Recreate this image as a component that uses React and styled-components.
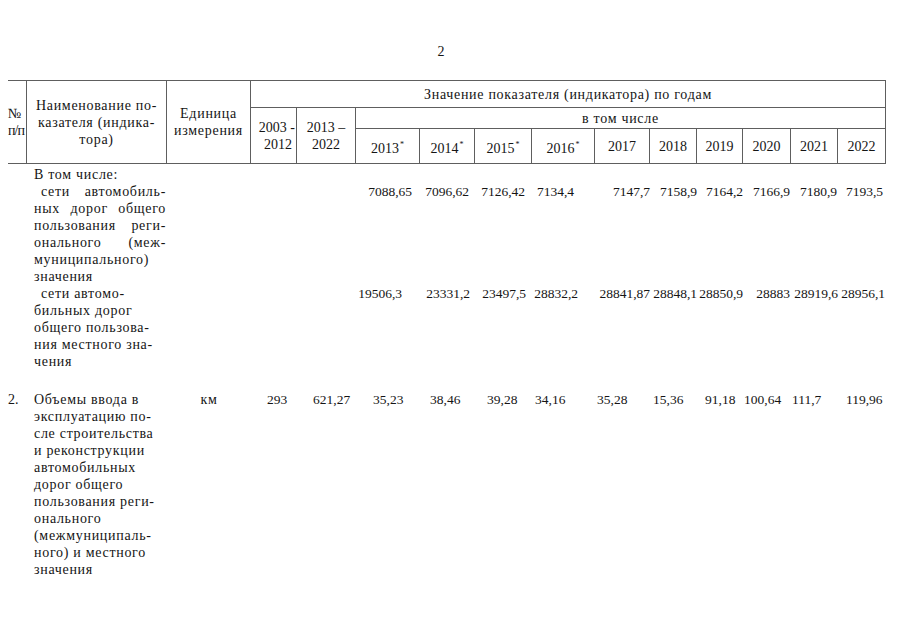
import React from "react";
import styled, {createGlobalStyle} from "styled-components";

const cols = "19px 140px 84px 46px 59px 64px 55px 57px 63px 55px 47px 46px 48px 47px 48px";
const line = "1px solid #5e5e5e";

const GlobalStyle = createGlobalStyle`
  html, body {
    margin: 0;
    background: #fff;
  }
  body {
    font-family: "Liberation Serif", "Times New Roman", serif;
    font-size: 14px;
    color: #151515;
  }
`

const Page = styled.div`
  width: 905px;
  height: 640px;
  padding: 43px 0 0 8px;
  box-sizing: border-box;
  overflow: hidden;
`
const PageNumber = styled.div`
  width: 878px;
  padding-right: 12px;
  box-sizing: border-box;
  text-align: center;
  line-height: 17px;
  height: 37px;
`
const HeadGrid = styled.div`
  display: grid;
  grid-template-columns: ${cols};
  grid-template-rows: 27px 21px 35px;
  border-top: ${line};
  width: 878px;
`
const HeadCell = styled.div`
  grid-column: ${p => p.col};
  grid-row: ${p => p.row};
  border-right: ${line};
  border-bottom: ${line};
  display: flex;
  flex-direction: column;
  justify-content: center;
  align-items: ${p => p.align || "center"};
  padding: ${p => p.pad || "0"};
  letter-spacing: ${p => (p.wide ? "0.7px" : "0")};
  line-height: 17px;
  box-sizing: border-box;
  white-space: nowrap;
`
const Star = styled.sup`
  font-size: 8px;
  vertical-align: 6px;
  margin-left: 1px;
`
const BodyRow = styled.div`
  display: grid;
  grid-template-columns: ${cols};
  width: 878px;
  margin-top: ${p => p.gap || 0}px;
  line-height: 17px;
`
const NumCell = styled.div`
  grid-column: 1;
`
const NameCell = styled.div`
  grid-column: 2;
  padding: 0 1px 0 7px;
  letter-spacing: 0.7px;
`
const UnitCell = styled.div`
  grid-column: 3;
  text-align: center;
  letter-spacing: 0.7px;
`
const Line = styled.div`
  white-space: nowrap;
  text-indent: ${p => (p.indent ? "7px" : "0")};
  text-align: ${p => (p.justify ? "justify" : "left")};
  text-align-last: ${p => (p.justify ? "justify" : "left")};
`
const Value = styled.div`
  white-space: nowrap;
  font-size: 13.5px;
  text-align: ${p => p.align};
  padding-right: ${p => (p.align === "right" ? p.pad : 0)}px;
  padding-left: ${p => (p.align === "left" ? p.pad : 0)}px;
`

const years = ["2013", "2014", "2015", "2016", "2017", "2018", "2019", "2020", "2021", "2022"];

const sub1 = ["7088,65", "7096,62", "7126,42", "7134,4", "7147,7", "7158,9", "7164,2", "7166,9", "7180,9", "7193,5"];
const sub1Pad = [8, 6, 7, 21, 0, 0, 0, 1, 1, 3];
const sub2 = ["19506,3", "23331,2", "23497,5", "28832,2", "28841,87", "28848,1", "28850,9", "28883", "28919,6", "28956,1"];
const sub2Pad = [18, 5, 6, 17, 0, 0, 0, 1, -2, 1];
const row2 = ["35,23", "38,46", "39,28", "34,16", "35,28", "15,36", "91,18", "100,64", "111,7", "119,96"];
const row2Pad = [17, 10, 12, 3, 2, 3, 8, 1, 1, 8];

const Values = ({items, pads, align}) => (
    <>
        {items.map((v, i) => (
            <Value key={i} align={align} pad={pads[i]}>{v}</Value>
        ))}
    </>
)

const App = () => {
    return (
        <Page>
            <GlobalStyle/>
            <PageNumber>2</PageNumber>

            <HeadGrid>
                <HeadCell col="1" row="1 / 4" align="flex-start">
                    <span>№</span>
                    <span style={{letterSpacing: -1}}>п/п</span>
                </HeadCell>
                <HeadCell col="2" row="1 / 4" wide>
                    <span>Наименование по-</span>
                    <span>казателя (индика-</span>
                    <span>тора)</span>
                </HeadCell>
                <HeadCell col="3" row="1 / 4" wide>
                    <span>Единица</span>
                    <span>измерения</span>
                </HeadCell>
                <HeadCell col="4 / 16" row="1" wide>
                    Значение показателя (индикатора) по годам
                </HeadCell>
                <HeadCell col="4" row="2 / 4" align="flex-end" pad="0 1px 0 0">
                    <span>2003 -</span>
                    <span style={{paddingRight: 3}}>2012</span>
                </HeadCell>
                <HeadCell col="5" row="2 / 4">
                    <span>2013 –</span>
                    <span>2022</span>
                </HeadCell>
                <HeadCell col="6 / 16" row="2" wide>в том числе</HeadCell>
                {years.map((y, i) => (
                    <HeadCell key={y} col={String(6 + i)} row="3">
                        <span>{y}{i < 4 && <Star>*</Star>}</span>
                    </HeadCell>
                ))}
            </HeadGrid>

            <BodyRow gap={2}>
                <NameCell>
                    <Line>В том числе:</Line>
                </NameCell>
            </BodyRow>
            <BodyRow>
                <NameCell>
                    <Line indent justify>сети автомобиль-</Line>
                    <Line justify>ных дорог общего</Line>
                    <Line justify>пользования реги-</Line>
                    <Line justify>онального (меж-</Line>
                    <Line>муниципального)</Line>
                    <Line>значения</Line>
                </NameCell>
                <UnitCell/>
                <div/>
                <div/>
                <Values items={sub1} pads={sub1Pad} align="right"/>
            </BodyRow>
            <BodyRow>
                <NameCell>
                    <Line indent>сети автомо-</Line>
                    <Line>бильных дорог</Line>
                    <Line>общего пользова-</Line>
                    <Line>ния местного зна-</Line>
                    <Line>чения</Line>
                </NameCell>
                <UnitCell/>
                <div/>
                <div/>
                <Values items={sub2} pads={sub2Pad} align="right"/>
            </BodyRow>

            <BodyRow gap={21}>
                <NumCell>2.</NumCell>
                <NameCell>
                    <Line>Объемы ввода в</Line>
                    <Line>эксплуатацию по-</Line>
                    <Line>сле строительства</Line>
                    <Line>и реконструкции</Line>
                    <Line>автомобильных</Line>
                    <Line>дорог общего</Line>
                    <Line>пользования реги-</Line>
                    <Line>онального</Line>
                    <Line>(межмуниципаль-</Line>
                    <Line>ного) и местного</Line>
                    <Line>значения</Line>
                </NameCell>
                <UnitCell>км</UnitCell>
                <Value align="left" pad={16}>293</Value>
                <Value align="left" pad={16}>621,27</Value>
                <Values items={row2} pads={row2Pad} align="left"/>
            </BodyRow>
        </Page>
    )
}

export default App
